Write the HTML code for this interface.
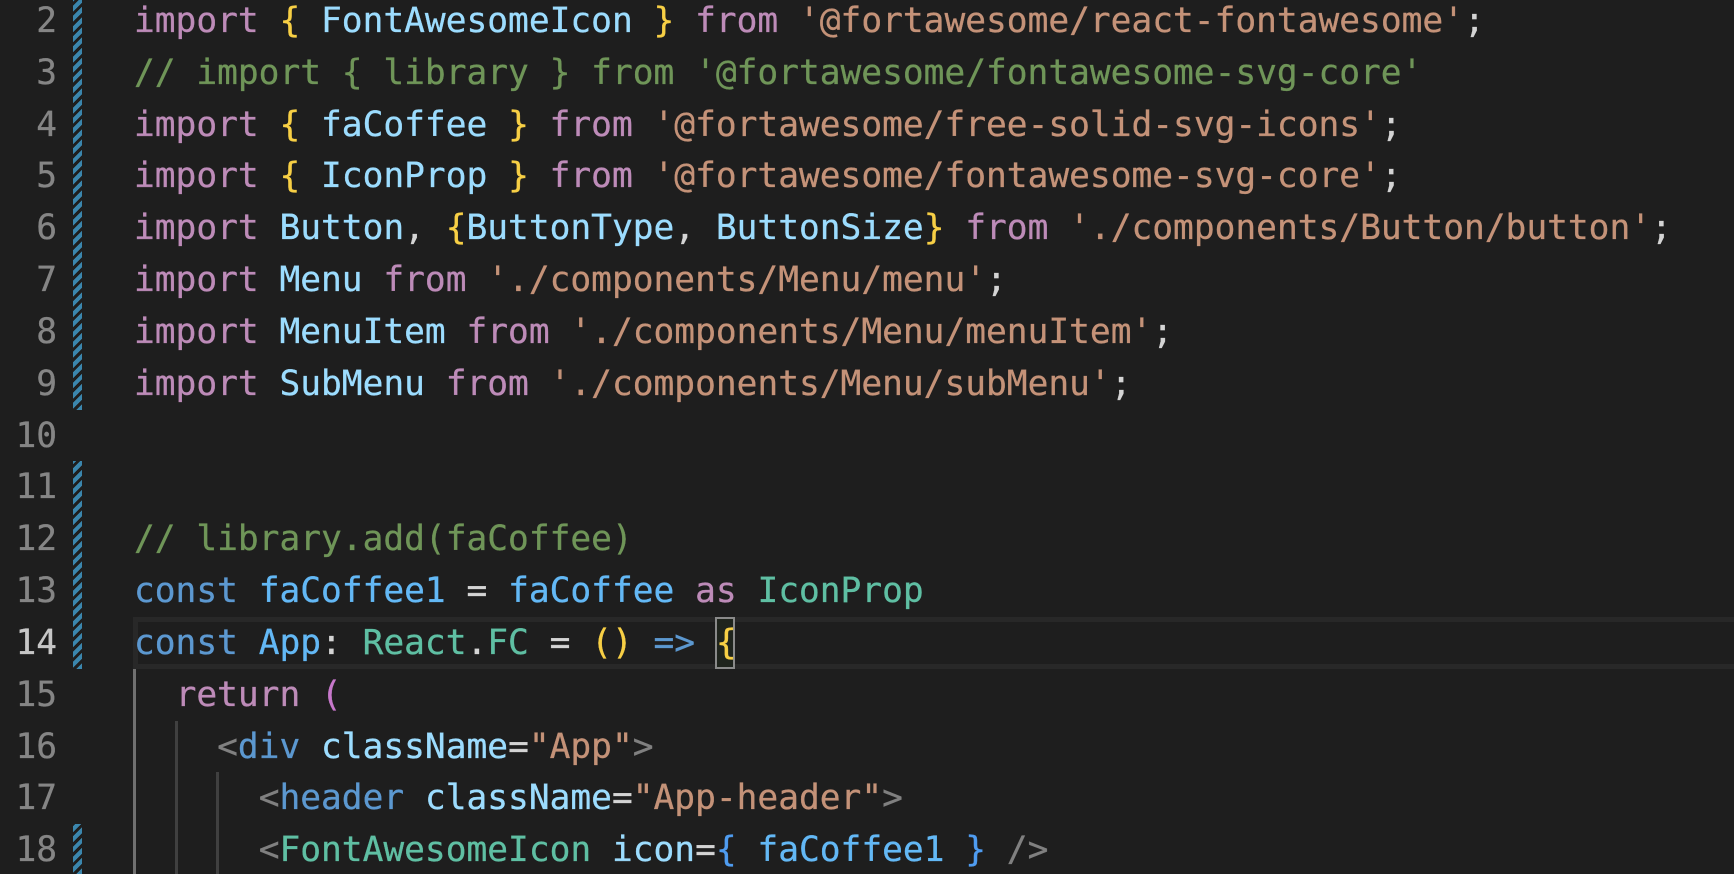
<!DOCTYPE html>
<html lang="en">
<head>
<meta charset="utf-8">
<title>App.tsx</title>
<style>
html{margin:0;padding:0;background:#1e1e1e;width:1734px;height:874px;overflow:hidden;}
body{margin:0;padding:0;background:#1e1e1e;width:1734px;height:874px;position:relative;overflow:hidden;}
.l,.n{position:absolute;white-space:pre;font-family:"DejaVu Sans Mono","Liberation Mono",monospace;font-size:34.52px;line-height:50px;height:50px;font-variant-ligatures:none;-webkit-text-stroke:.3px;filter:blur(.3px);}
.l{left:134px;color:#d4d4d4;margin-top:1px;}
.n{left:0;width:57px;text-align:right;color:#858585;margin-top:1px;}
.n.a{color:#c6c6c6;}
.k{color:#bd8bb8}.y{color:#f7cf45}.v{color:#9cdcfe}.s{color:#c49278}.c{color:#6f9558}
.b{color:#5c98d0}.f{color:#63b8f5}.t{color:#5fbfa3}.g{color:#808080}.m{color:#c778cb}.p{color:#d4d4d4}.h{color:#4f9cf0}
.bar{position:absolute;left:73px;width:9px;background:repeating-linear-gradient(-45deg,#3b86ad 0,#3b86ad 4.2px,#1e1e1e 4.2px,#1e1e1e 7.2px);}
.g1{position:absolute;width:3px;}
</style>
</head>
<body>
<div class="bar" style="top:0;height:410px"></div>
<div class="bar" style="top:461px;height:208px"></div>
<div class="bar" style="top:824px;height:50px"></div>

<div style="position:absolute;left:133px;top:617px;width:1601px;height:52px;box-sizing:border-box;border:5px solid #282828;border-right:0"></div>
<div style="position:absolute;left:715px;top:617px;width:20px;height:52px;box-sizing:border-box;border:2px solid #8a8a8a;background:#1f241d"></div>
<div class="g1" style="left:133px;top:669px;height:205px;background:#707070"></div>
<div class="g1" style="left:175px;top:721px;height:153px;background:#404040"></div>
<div class="g1" style="left:216px;top:772px;height:102px;background:#404040"></div>

<div class="n" style="top:-5px">2</div>
<div class="n" style="top:47px">3</div>
<div class="n" style="top:99px">4</div>
<div class="n" style="top:150px">5</div>
<div class="n" style="top:202px">6</div>
<div class="n" style="top:254px">7</div>
<div class="n" style="top:306px">8</div>
<div class="n" style="top:358px">9</div>
<div class="n" style="top:410px">10</div>
<div class="n" style="top:461px">11</div>
<div class="n" style="top:513px">12</div>
<div class="n" style="top:565px">13</div>
<div class="n a" style="top:617px">14</div>
<div class="n" style="top:669px">15</div>
<div class="n" style="top:721px">16</div>
<div class="n" style="top:772px">17</div>
<div class="n" style="top:824px">18</div>

<div class="l" style="top:-5px"><span class="k">import</span> <span class="y">{</span> <span class="v">FontAwesomeIcon</span> <span class="y">}</span> <span class="k">from</span> <span class="s">'@fortawesome/react-fontawesome'</span>;</div>
<div class="l" style="top:47px"><span class="c">// import { library } from '@fortawesome/fontawesome-svg-core'</span></div>
<div class="l" style="top:99px"><span class="k">import</span> <span class="y">{</span> <span class="v">faCoffee</span> <span class="y">}</span> <span class="k">from</span> <span class="s">'@fortawesome/free-solid-svg-icons'</span>;</div>
<div class="l" style="top:150px"><span class="k">import</span> <span class="y">{</span> <span class="v">IconProp</span> <span class="y">}</span> <span class="k">from</span> <span class="s">'@fortawesome/fontawesome-svg-core'</span>;</div>
<div class="l" style="top:202px"><span class="k">import</span> <span class="v">Button</span>, <span class="y">{</span><span class="v">ButtonType</span>, <span class="v">ButtonSize</span><span class="y">}</span> <span class="k">from</span> <span class="s">'./components/Button/button'</span>;</div>
<div class="l" style="top:254px"><span class="k">import</span> <span class="v">Menu</span> <span class="k">from</span> <span class="s">'./components/Menu/menu'</span>;</div>
<div class="l" style="top:306px"><span class="k">import</span> <span class="v">MenuItem</span> <span class="k">from</span> <span class="s">'./components/Menu/menuItem'</span>;</div>
<div class="l" style="top:358px"><span class="k">import</span> <span class="v">SubMenu</span> <span class="k">from</span> <span class="s">'./components/Menu/subMenu'</span>;</div>
<div class="l" style="top:513px"><span class="c">// library.add(faCoffee)</span></div>
<div class="l" style="top:565px"><span class="b">const</span> <span class="f">faCoffee1</span> = <span class="f">faCoffee</span> <span class="k">as</span> <span class="t">IconProp</span></div>
<div class="l" style="top:617px"><span class="b">const</span> <span class="f">App</span>: <span class="t">React</span>.<span class="t">FC</span> = <span class="y">()</span> <span class="b">=&gt;</span> <span class="y">{</span></div>
<div class="l" style="top:669px">  <span class="k">return</span> <span class="m">(</span></div>
<div class="l" style="top:721px">    <span class="g">&lt;</span><span class="b">div</span> <span class="v">className</span>=<span class="s">"App"</span><span class="g">&gt;</span></div>
<div class="l" style="top:772px">      <span class="g">&lt;</span><span class="b">header</span> <span class="v">className</span>=<span class="s">"App-header"</span><span class="g">&gt;</span></div>
<div class="l" style="top:824px">      <span class="g">&lt;</span><span class="t">FontAwesomeIcon</span> <span class="v">icon</span>=<span class="h">{</span> <span class="f">faCoffee1</span> <span class="h">}</span> <span class="g">/&gt;</span></div>
</body>
</html>
